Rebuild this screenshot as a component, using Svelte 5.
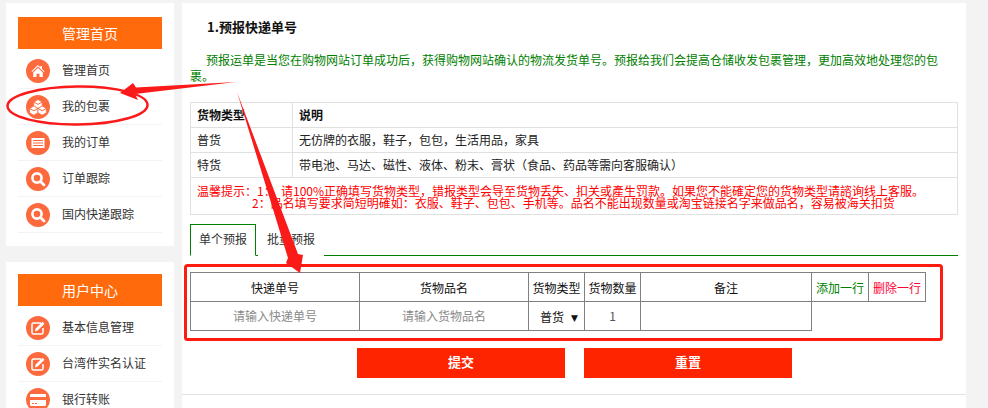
<script>
  const sections = [
    { title: '管理首页', items: [['home', '管理首页'], ['boxes', '我的包裹'], ['list', '我的订单'], ['search', '订单跟踪'], ['search', '国内快递跟踪']] },
    { title: '用户中心', items: [['edit', '基本信息管理'], ['edit', '台湾件实名认证'], ['card', '银行转账']] }
  ];
</script>

{#snippet icon(name)}
  <svg class="icon" viewBox="0 0 24 24" width="24" height="24" aria-hidden="true">
    <circle cx="12" cy="12" r="12" fill="#fd6a3e" />
    {#if name === 'home'}
      <path fill="#fff" d="M12 6 5.500 12.300l.7.7 5.800-5.400 5.800 5.400.7-.7-2.500-2.400V7h-1.800v1.200L12 6Zm0 3-4.800 4.400V18h3.300v-3.200h3V18h3.300v-4.600L12 9Z" />
    {:else if name === 'boxes'}
      <g fill="#fff" stroke="#fd6a3e" stroke-width=".8">
        <path d="M12 4.500 16.200 7v4.400L12 13.800 7.800 11.400V7Z" />
        <path d="M7.800 11 12 13.400v4.400L7.800 20.200 3.600 17.800v-4.400Z" />
        <path d="M16.200 11 20.400 13.400v4.400L16.200 20.200 12 17.800v-4.400Z" />
      </g>
      <path fill="none" stroke="#fd6a3e" stroke-width="1" d="M7.800 7 12 9.400 16.200 7M3.600 13.400l4.200 2.400 4.200-2.400 4.200 2.400 4.200-2.400" />
    {:else if name === 'list'}
      <rect x="5.500" y="7" width="13" height="10" fill="#fff" />
      <path stroke="#fd6a3e" stroke-width="1" d="M7 9.500h10M7 12h10M7 14.500h10" />
    {:else if name === 'search'}
      <circle cx="11" cy="11" r="4.600" fill="none" stroke="#fff" stroke-width="2.600" />
      <path stroke="#fff" stroke-width="2.800" stroke-linecap="round" d="M15 15l3 3" />
    {:else if name === 'edit'}
      <path fill="none" stroke="#fff" stroke-width="1.500" d="M15 7H7.500A1.500 1.500 0 0 0 6 8.500v8A1.500 1.500 0 0 0 7.500 18h8a1.500 1.500 0 0 0 1.500-1.500V12" />
      <path fill="#fff" d="M16.500 5.800l2 2-6.800 6.800-2.800.8.800-2.800Z" />
    {:else if name === 'card'}
      <path fill="#fff" d="M5 6h14a1 1 0 0 1 1 1v2H4V7a1 1 0 0 1 1-1ZM4 12h16v5a1 1 0 0 1-1 1H5a1 1 0 0 1-1-1Z" />
      <path stroke="#fd6a3e" stroke-width="1" d="M6 15.500h2M9 15.500h2" />
    {/if}
  </svg>
{/snippet}

<div class="page">
  <aside class="sidebar">
    {#each sections as section}
      <nav class="card">
        <h3>{section.title}</h3>
        <ul>
          {#each section.items as [name, label]}
            <li>{@render icon(name)}<span>{label}</span></li>
          {/each}
        </ul>
      </nav>
    {/each}
  </aside>

  <main class="main">
    <h2>1.预报快递单号</h2>
    <p class="intro">预报运单是当您在购物网站订单成功后，获得购物网站确认的物流发货单号。预报给我们会提高仓储收发包裹管理，更加高效地处理您的包裹。</p>

    <table class="info">
      <colgroup><col class="type" /><col /></colgroup>
      <tbody>
        <tr><th>货物类型</th><th>说明</th></tr>
        <tr><td>普货</td><td>无仿牌的衣服，鞋子，包包，生活用品，家具</td></tr>
        <tr><td>特货</td><td>带电池、马达、磁性、液体、粉末、膏状（食品、药品等需向客服确认）</td></tr>
        <tr>
          <td colspan="2" class="warn">
            <div class="first">温馨提示：1：  请100%正确填写货物类型，错报类型会导至货物丢失、扣关或產生罚款。如果您不能確定您的货物类型请諮询线上客服。</div>
            <div class="second">2：品名填写要求简短明確如：衣服、鞋子、包包、手机等。品名不能出现数量或淘宝链接名字来做品名，容易被海关扣货</div>
          </td>
        </tr>
      </tbody>
    </table>

    <div class="tabs">
      <button class="tab active" type="button">单个预报</button>
      <button class="tab" type="button">批量预报</button>
    </div>

    <table class="form">
      <colgroup>
        <col class="c1" /><col class="c1" /><col class="c2" /><col class="c2" /><col class="c3" /><col class="c4" /><col class="c4" />
      </colgroup>
      <tbody>
        <tr>
          <td>快递单号</td><td>货物品名</td><td>货物类型</td><td>货物数量</td><td>备注</td>
          <td class="add">添加一行</td><td class="del">删除一行</td>
        </tr>
        <tr class="entry">
          <td><input placeholder="请输入快递单号" /></td>
          <td><input placeholder="请输入货物品名" /></td>
          <td class="select"><span>普货</span><i>▼</i></td>
          <td><input class="qty" value="1" /></td>
          <td><input /></td>
        </tr>
      </tbody>
    </table>

    <div class="actions">
      <button type="button">提交</button>
      <button type="button">重置</button>
    </div>
    <div class="rule"></div>
  </main>

  <svg class="marks" width="988" height="408" viewBox="0 0 988 408" aria-hidden="true">
    <rect x="185.500" y="265.500" width="756" height="74" rx="2" fill="none" stroke="#fe1b10" stroke-width="3" />
    <ellipse cx="77.500" cy="105.500" rx="70" ry="19" fill="none" stroke="#fb1a1a" stroke-width="2.500" transform="rotate(-0.500 77.500 105.500)" />
    <path fill="#fb1a1a" d="M236 82 136 87.500 133 83 120 93 138 100 135 94Z" />
    <path fill="#fb1a1a" d="M237 92 288 258 286 263 300 273 303 255 298 254Z" />
  </svg>
</div>

<style>
  :global(body) {
    margin: 0;
    background: #f3f3f3;
  }
  .page {
    position: relative;
    display: flex;
    gap: 8px;
    height: 408px;
    padding: 3px 0 0 6px;
    box-sizing: border-box;
    overflow: hidden;
    font: 12px "Noto Sans CJK SC", "Liberation Sans", sans-serif;
    color: #222;
  }
  .sidebar {
    width: 168px;
    flex: none;
    display: flex;
    flex-direction: column;
    gap: 16px;
  }
  .card {
    background: #fff;
    padding: 14px 12px 13px;
  }
  .card:nth-child(2) {
    padding-top: 12px;
  }
  h3 {
    margin: 0 0 4px;
    height: 32px;
    background: #ff6a0c;
    color: #fff;
    font-size: 14px;
    font-weight: 400;
    line-height: 32px;
    text-align: center;
  }
  ul {
    margin: 0;
    padding: 0;
    list-style: none;
  }
  li {
    display: flex;
    align-items: center;
    gap: 12px;
    height: 36px;
    box-sizing: border-box;
    padding-left: 8px;
    border-bottom: 1px solid #f3f3f3;
    color: #333;
  }
  li span {
    margin-bottom: 2px;
  }
  .icon {
    flex: none;
  }
  .main {
    width: 784px;
    flex: none;
    background: #fff;
    padding: 0 8px;
    box-sizing: border-box;
  }
  h2 {
    margin: 0;
    padding: 15px 0 0 17px;
    font-size: 13px;
    line-height: 18px;
    font-weight: 700;
    color: #111;
  }
  .intro {
    margin: 16px 0 0;
    text-indent: 16px;
    line-height: 16px;
    color: #008000;
  }
  table {
    border-collapse: collapse;
    table-layout: fixed;
  }
  .info {
    width: 768px;
    margin-top: 18px;
  }
  .info .type {
    width: 102px;
  }
  .info th,
  .info td {
    height: 25px;
    padding: 0 6px;
    border: 1px solid #e0e0e0;
    text-align: left;
    font-size: 12px;
    line-height: 16px;
    box-sizing: border-box;
    color: #222;
  }
  .info th {
    font-weight: 700;
    color: #111;
  }
  .info .warn {
    height: 37px;
    padding-top: 2px;
    color: #ff0000;
    line-height: 12px;
  }
  .first {
    white-space: pre-wrap;
  }
  .second {
    padding-left: 55px;
  }
  .tabs {
    display: flex;
    margin-top: 9px;
    height: 32px;
    border-bottom: 1px solid #008000;
    box-sizing: border-box;
  }
  .tab {
    width: 66px;
    height: 32px;
    padding: 0 0 3px;
    border: 1px solid transparent;
    background: #fff;
    font: inherit;
    color: #333;
  }
  .tab + .tab {
    margin-left: 2px;
  }
  .tab.active {
    border-color: #008000;
    border-bottom-color: #fff;
  }
  .form {
    width: 736px;
    margin-top: 16px;
  }
  .c1 { width: 169px; }
  .c2 { width: 56px; }
  .c3 { width: 171px; }
  .c4 { width: 57px; }
  .form td {
    height: 29px;
    padding: 0;
    border: 1px solid #808080;
    text-align: center;
    box-sizing: border-box;
    color: #111;
    white-space: nowrap;
  }
  .form .entry td {
    padding-bottom: 2px;
  }
  .form .add { color: #008000; }
  .form .del { color: #ff0033; }
  input {
    display: block;
    width: 100%;
    height: 25px;
    border: 0;
    padding: 0;
    outline: 0;
    background: transparent;
    font: inherit;
    text-align: center;
    color: #555;
  }
  input::placeholder {
    color: #8a8a8a;
    opacity: 1;
  }
  .form .select span {
    margin: 0 7px 0 5px;
    position: relative;
    top: 1px;
  }
  .form .select i {
    font-style: normal;
    font-size: 9px;
    font-family: "DejaVu Sans", sans-serif;
  }
  .actions {
    display: flex;
    gap: 19px;
    margin: 17px 0 0 167px;
  }
  .actions button {
    width: 208px;
    height: 30px;
    padding: 0 0 3px;
    border: 0;
    background: #ff2400;
    color: #fff;
    font: 700 13px "Noto Sans CJK SC", "Liberation Sans", sans-serif;
  }
  .rule {
    height: 1px;
    margin: 16px -8px 0;
    background: #e3e3e3;
  }
  .marks {
    position: absolute;
    left: 0;
    top: 0;
    pointer-events: none;
  }
</style>
